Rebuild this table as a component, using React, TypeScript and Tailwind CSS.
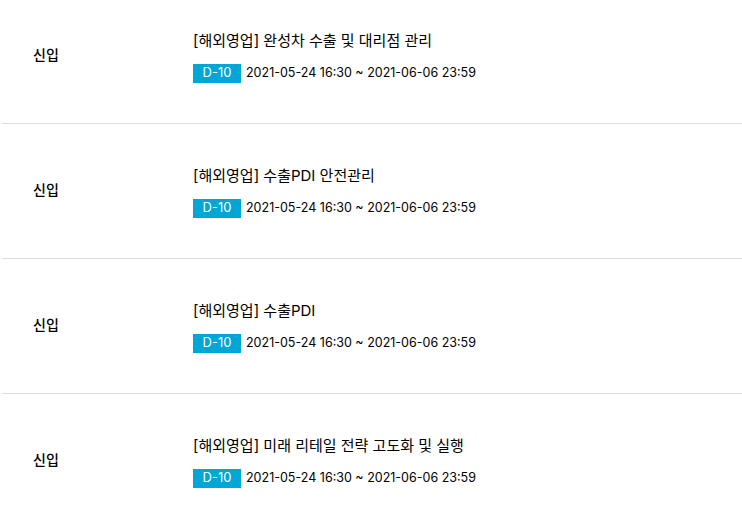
const jobs = [
  { type: '신입', title: '[해외영업] 완성차 수출 및 대리점 관리', dday: 'D-10', period: '2021-05-24 16:30 ~ 2021-06-06 23:59' },
  { type: '신입', title: '[해외영업] 수출PDI 안전관리', dday: 'D-10', period: '2021-05-24 16:30 ~ 2021-06-06 23:59' },
  { type: '신입', title: '[해외영업] 수출PDI', dday: 'D-10', period: '2021-05-24 16:30 ~ 2021-06-06 23:59' },
  { type: '신입', title: '[해외영업] 미래 리테일 전략 고도화 및 실행', dday: 'D-10', period: '2021-05-24 16:30 ~ 2021-06-06 23:59' },
];

export default function App() {
  return (
    <div className="w-[742px] h-[523px] overflow-hidden bg-white text-black font-['Inter','Noto_Sans_CJK_KR',sans-serif]">
      <ul className="-mt-[11px] pl-[2px]">
        {jobs.map((job, i) => (
          <li key={i} className="flex items-center h-[135px] border-b border-[#dddddd]">
            {/* Job type */}
            <div className="w-[191px] pl-[31px] pb-[3px] text-[14px] font-medium">{job.type}</div>

            {/* Title and period */}
            <div className="flex flex-col gap-[13px] pt-[1px]">
              <p className="text-[15px] leading-[20px]">{job.title}</p>
              <div className="flex items-center gap-[5px]">
                <span className="inline-flex items-center justify-center w-[48px] h-[19px] bg-[#00a7d4] text-white text-[13px]">
                  {job.dday}
                </span>
                <span className="text-[12.5px]">{job.period}</span>
              </div>
            </div>
          </li>
        ))}
      </ul>
    </div>
  );
}
